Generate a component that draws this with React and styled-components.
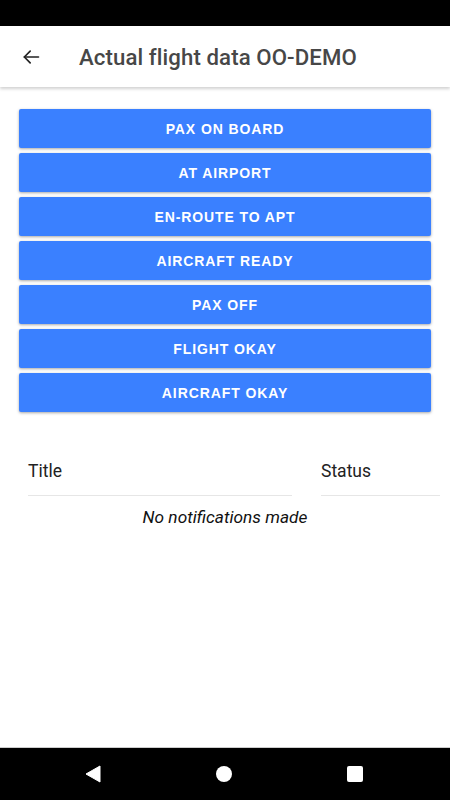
import React from "react";
import styled, { createGlobalStyle } from "styled-components";

const Global = createGlobalStyle`
  html, body { margin: 0; padding: 0; background: #fff; }
  body { font-family: Roboto, "Noto Sans", sans-serif; }
  * { box-sizing: border-box; }
`;

const Screen = styled.div`
  width: 450px;
  height: 800px;
  display: flex;
  flex-direction: column;
  background: #fff;
  overflow: hidden;
`;

const StatusBar = styled.div`
  height: 26px;
  background: #000;
  flex: none;
`;

const Header = styled.header`
  height: 61px;
  flex: none;
  display: flex;
  align-items: center;
  padding-left: 20px;
  background: #fff;
  box-shadow: 0 2px 3px rgba(0, 0, 0, 0.18);
  position: relative;
  z-index: 1;
`;

const BackButton = styled.button`
  border: none;
  background: none;
  padding: 0;
  width: 22px;
  height: 22px;
  display: flex;
  align-items: center;
  justify-content: center;
  color: #222;
  cursor: pointer;
`;

const Title = styled.h1`
  margin: 0 0 0 37px;
  font-size: 22.2px;
  font-weight: 500;
  color: #474747;
  letter-spacing: 0.1px;
`;

const Content = styled.main`
  flex: 1;
  padding: 22px 19px 0 19px;
  display: flex;
  flex-direction: column;
`;

const ButtonList = styled.div`
  display: flex;
  flex-direction: column;
  gap: 5px;
`;

const ActionButton = styled.button`
  height: 39px;
  width: 100%;
  border: none;
  border-radius: 2px;
  background: #3a80ff;
  color: #fff;
  font-family: "Liberation Sans", Arial, sans-serif;
  font-size: 14px;
  font-weight: 700;
  letter-spacing: 0.9px;
  text-transform: uppercase;
  box-shadow: 0 1px 3px rgba(0, 0, 0, 0.35);
  cursor: pointer;
`;

const Table = styled.div`
  margin-top: 40px;
  padding-left: 9px;
  display: grid;
  grid-template-columns: 264px 119px;
  column-gap: 29px;
  margin-right: -9px;
`;

const HeadCell = styled.div`
  height: 44px;
  display: flex;
  align-items: center;
  padding-bottom: 6px;
  font-size: 17.5px;
  color: #222;
  border-bottom: 1px solid #e6e6e6;
`;

const EmptyRow = styled.div`
  grid-column: 1 / -1;
  text-align: center;
  font-style: italic;
  font-size: 17.3px;
  color: #111;
  margin-top: 11px;
  margin-left: -18px;
`;

const NavBar = styled.nav`
  height: 53px;
  flex: none;
  background: #000;
  display: grid;
  grid-template-columns: 1fr 1fr 1fr;
  align-items: center;
  justify-items: center;
  padding: 0 30px 0 28px;
  border-top: 1px solid #ccc;
`;

const NavCircle = styled.div`
  width: 16px;
  height: 16px;
  border-radius: 50%;
  background: #fff;
`;

const NavSquare = styled.div`
  width: 16px;
  height: 16px;
  border-radius: 2px;
  background: #fff;
`;

const labels = [
  "PAX ON BOARD",
  "AT AIRPORT",
  "EN-ROUTE TO APT",
  "AIRCRAFT READY",
  "PAX OFF",
  "FLIGHT OKAY",
  "AIRCRAFT OKAY",
];

export default function App() {
  return (
    <>
      <Global />
      <Screen>
        <StatusBar />
        <Header>
          <BackButton aria-label="Back">
            <svg width="20" height="20" viewBox="0 0 24 24" fill="none" stroke="#222" strokeWidth="2" strokeLinecap="round" strokeLinejoin="round">
              <path d="M21 12H4" />
              <path d="M11 5l-7 7 7 7" />
            </svg>
          </BackButton>
          <Title>Actual flight data OO-DEMO</Title>
        </Header>
        <Content>
          <ButtonList>
            {labels.map((l) => (
              <ActionButton key={l}>{l}</ActionButton>
            ))}
          </ButtonList>
          <Table>
            <HeadCell>Title</HeadCell>
            <HeadCell>Status</HeadCell>
            <EmptyRow>No notifications made</EmptyRow>
          </Table>
        </Content>
        <NavBar>
          <svg width="16" height="18" viewBox="0 0 16 18">
            <path d="M15 1 L1 9 L15 17 Z" fill="#fff" stroke="#fff" strokeWidth="1" strokeLinejoin="round" />
          </svg>
          <NavCircle />
          <NavSquare />
        </NavBar>
      </Screen>
    </>
  );
}
